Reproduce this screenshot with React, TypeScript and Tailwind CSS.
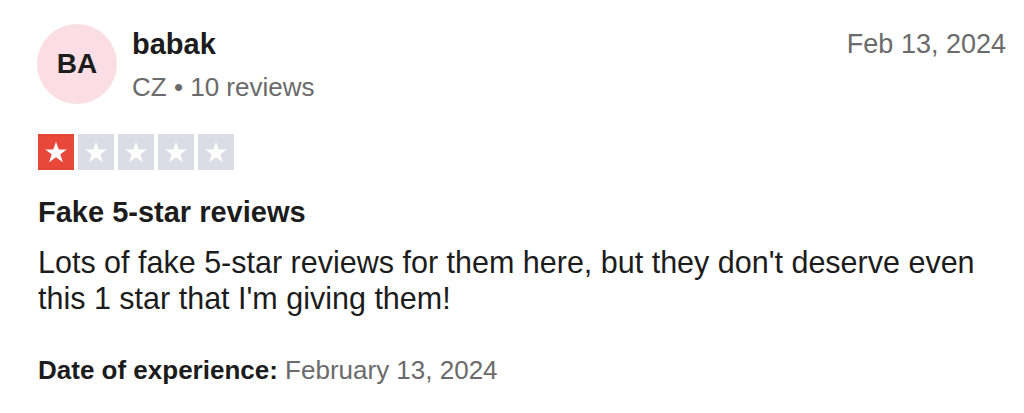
import React from "react";

function Star({ color }: { color: string }) {
  return (
    <div className={`w-[36px] h-[36px] flex items-center justify-center ${color}`}>
      <svg viewBox="0 0 24 24" width="26" height="26">
        <path d="M12 2.5l2.6 7.1h7.4l-6 4.5 2.3 7.3L12 16.8l-6.3 4.6 2.3-7.3-6-4.5h7.4z" fill="#ffffff" />
      </svg>
    </div>
  );
}

export default function App() {
  return (
    <div
      className="w-[1024px] h-[413px] bg-white text-[#1c1c1c] pl-[38px] pr-[18px] pt-[24px]"
      style={{ fontFamily: '"Liberation Sans", Arial, sans-serif' }}
    >
      <div className="flex items-start">
        <div className="w-[80px] h-[80px] rounded-full bg-[#fadde5] flex items-center justify-center -ml-[1px] shrink-0">
          <span className="text-[28px] font-bold leading-none">BA</span>
        </div>
        <div className="ml-[15px] flex flex-col pt-[3px]">
          <span className="text-[29px] font-bold leading-[34px]">babak</span>
          <span className="text-[26px] leading-[34px] text-[#6b6b6b] mt-[9px]">CZ • 10 reviews</span>
        </div>
        <div className="ml-auto pt-[3px] text-[27px] leading-[34px] text-[#6b6b6b]">Feb 13, 2024</div>
      </div>
      <div className="flex gap-[4px] mt-[30px]">
        <Star color="bg-[#e8473a]" />
        <Star color="bg-[#dcdce6]" />
        <Star color="bg-[#dcdce6]" />
        <Star color="bg-[#dcdce6]" />
        <Star color="bg-[#dcdce6]" />
      </div>
      <div className="mt-[25px] text-[29px] font-bold leading-[34px]">Fake 5-star reviews</div>
      <p className="mt-[15px] text-[30.5px] leading-[36px] max-w-[960px]">
        Lots of fake 5-star reviews for them here, but they don't deserve even this 1 star that I'm giving them!
      </p>
      <div className="mt-[39px] text-[26px] leading-[30px]">
        <span className="font-bold">Date of experience:</span>{" "}
        <span className="text-[#6b6b6b]">February 13, 2024</span>
      </div>
    </div>
  );
}
